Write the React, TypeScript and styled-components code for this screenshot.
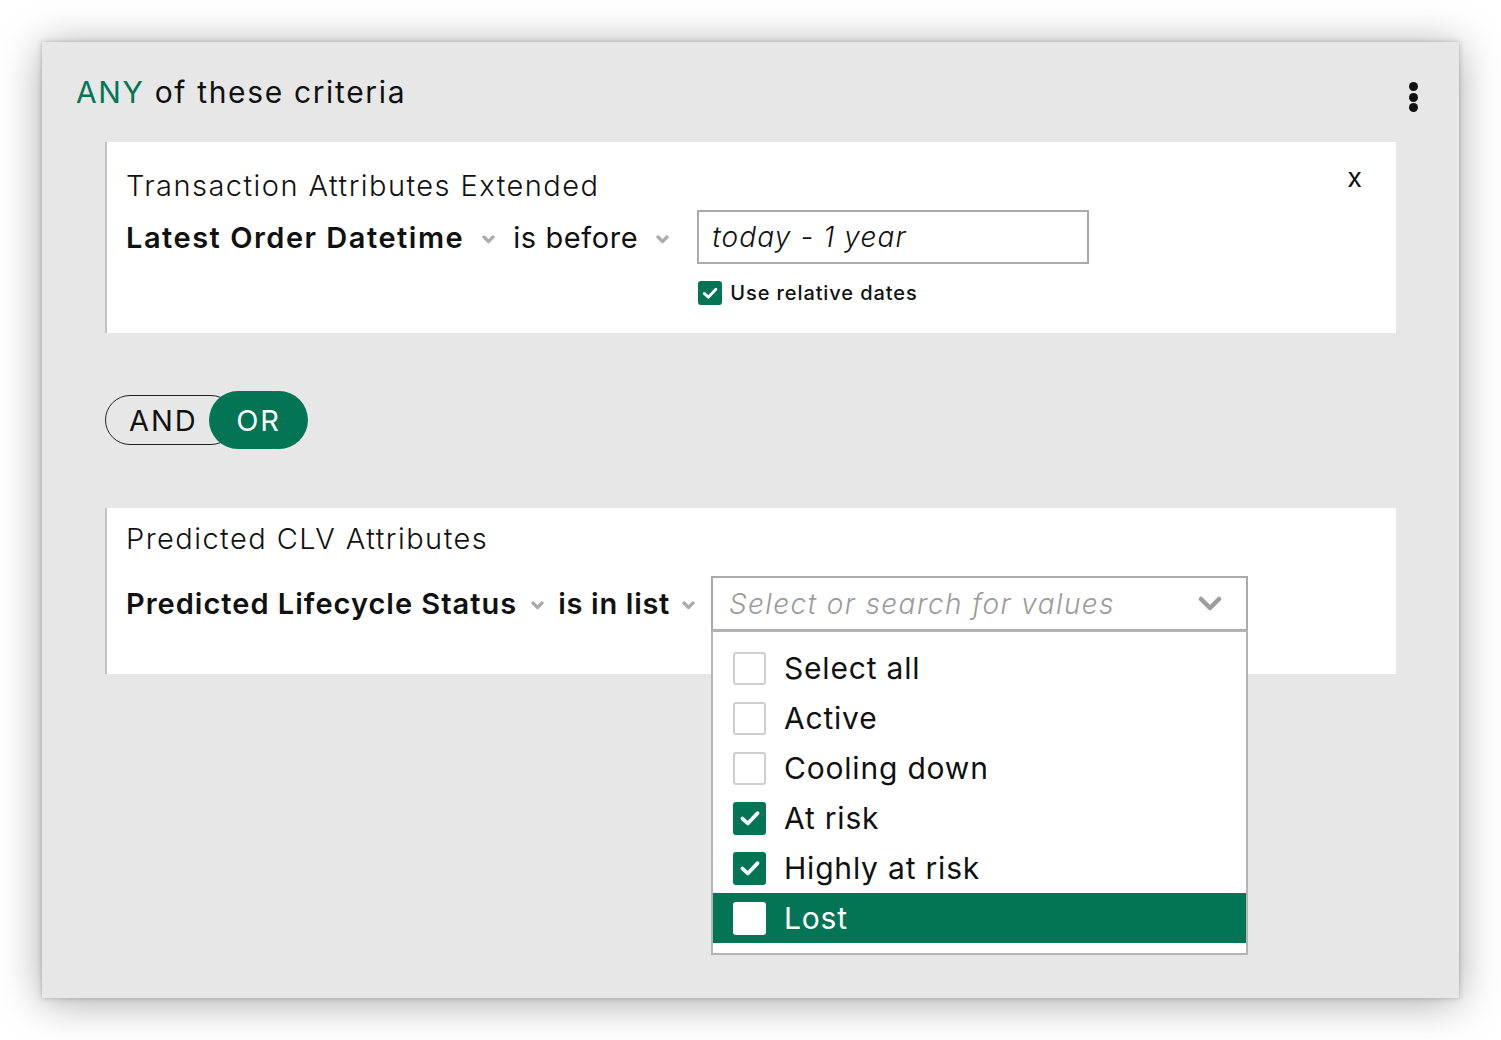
import React from 'react';
import styled, { createGlobalStyle } from 'styled-components';

const GREEN = '#037554';
const FONT = `Inter, "Open Sans", "DejaVu Sans", sans-serif`;

const Global = createGlobalStyle`
  html, body { margin: 0; padding: 0; background: #ffffff; }
  body { font-family: ${FONT}; color: #111111; }
  * { box-sizing: border-box; }
`;

const Page = styled.div`
  width: 1501px;
  height: 1040px;
  padding: 42px 0 0 42px;
  overflow: hidden;
`;

const Card = styled.section`
  width: 1417px;
  height: 956px;
  background: #e7e7e7;
  box-shadow: 0 0 5px rgba(0, 0, 0, 0.24), 0 4px 40px rgba(0, 0, 0, 0.34);
  padding: 0 34px;
  display: flex;
  flex-direction: column;
`;

const Header = styled.header`
  height: 100px;
  display: flex;
  align-items: center;
  justify-content: space-between;
`;

const HeaderTitle = styled.h2`
  margin: 0;
  font-size: 30px;
  font-weight: 400;
  letter-spacing: 1.65px;
  line-height: 36px;
  color: #111;
`;

const Any = styled.span`
  color: ${GREEN};
`;

const Kebab = styled.button`
  width: 24px;
  height: 32px;
  margin-top: 10px;
  padding: 0;
  border: 0;
  background: transparent;
  display: flex;
  flex-direction: column;
  align-items: center;
  justify-content: center;
  gap: 1.5px;
`;

const Dot = styled.span`
  width: 9px;
  height: 9px;
  border-radius: 50%;
  background: #111;
`;

const Conditions = styled.div`
  margin: 0 29px;
  display: flex;
  flex-direction: column;
`;

const ConditionCard = styled.div<{ $h: number; $pt: number }>`
  position: relative;
  height: ${(p) => p.$h}px;
  background: #ffffff;
  border-left: 2px solid #c4c4c4;
  padding: ${(p) => p.$pt}px 34px 0 19px;
  display: flex;
  flex-direction: column;
`;

const TitleRow = styled.div`
  height: 36px;
  display: flex;
  align-items: center;
  justify-content: space-between;
`;

const GroupTitle = styled.div`
  font-size: 29px;
  font-weight: 300;
  letter-spacing: 1.45px;
  line-height: 36px;
`;

const Close = styled.button`
  border: 0;
  background: transparent;
  padding: 0;
  font-family: ${FONT};
  font-size: 27px;
  font-weight: 400;
  line-height: 26px;
  color: #111;
  margin-top: -17px;
`;

const Row = styled.div<{ $mt: number }>`
  margin-top: ${(p) => p.$mt}px;
  display: flex;
  align-items: flex-start;
`;

const Field = styled.div<{ $h: number; $bold?: boolean; $ls: number }>`
  height: ${(p) => p.$h}px;
  display: flex;
  align-items: center;
  font-size: 29px;
  font-weight: ${(p) => (p.$bold ? 600 : 400)};
  letter-spacing: ${(p) => p.$ls}px;
  white-space: nowrap;
`;

const ChevronWrap = styled.span<{ $h: number; $ml: number; $mr: number }>`
  height: ${(p) => p.$h}px;
  margin: 0 ${(p) => p.$mr}px 0 ${(p) => p.$ml}px;
  display: flex;
  align-items: center;
  padding-top: 4px;
`;

const SmallChevron = ({ h, ml, mr }: { h: number; ml: number; mr: number }) => (
  <ChevronWrap $h={h} $ml={ml} $mr={mr}>
    <svg width="13" height="9" viewBox="0 0 13 9">
      <polyline points="2,2 6.5,6.5 11,2" fill="none" stroke="#ababab" strokeWidth="3.2" strokeLinecap="round" strokeLinejoin="round" />
    </svg>
  </ChevronWrap>
);

const ValueColumn = styled.div`
  display: flex;
  flex-direction: column;
`;

const TextInput = styled.div`
  width: 392px;
  height: 54px;
  border: 2px solid #ababab;
  padding-left: 13px;
  display: flex;
  align-items: center;
  font-size: 28px;
  font-style: italic;
  font-weight: 300;
  letter-spacing: 1.1px;
  color: #111;
`;

const CheckRow = styled.label`
  margin-top: 17px;
  margin-left: 1px;
  display: flex;
  align-items: center;
  gap: 8px;
  font-size: 20px;
  font-weight: 500;
  letter-spacing: 0.9px;
  line-height: 24px;
`;

const Box = styled.span<{ $size: number; $checked?: boolean; $inverse?: boolean }>`
  width: ${(p) => p.$size}px;
  height: ${(p) => p.$size}px;
  flex: none;
  border-radius: 3px;
  display: flex;
  align-items: center;
  justify-content: center;
  background: ${(p) => (p.$checked ? GREEN : '#ffffff')};
  border: 2px solid ${(p) => (p.$checked ? GREEN : p.$inverse ? '#ffffff' : '#cfcfcf')};
`;

const Tick = ({ size }: { size: number }) => (
  <svg width={size} height={size} viewBox="0 0 24 24">
    <polyline points="5,12.5 10,17 19,7.5" fill="none" stroke="#ffffff" strokeWidth="3.4" strokeLinecap="round" strokeLinejoin="round" />
  </svg>
);

const Toggle = styled.div`
  margin: 58px 0 59px;
  height: 58px;
  display: flex;
  align-items: center;
`;

const AndPill = styled.button`
  width: 131px;
  height: 50px;
  border: 1px solid #222;
  border-radius: 25px;
  background: transparent;
  padding: 0 0 0 23px;
  text-align: left;
  font-family: ${FONT};
  font-size: 29px;
  font-weight: 400;
  letter-spacing: 1.9px;
  color: #111;
`;

const OrPill = styled.button`
  width: 99px;
  height: 58px;
  margin-left: -27px;
  border: 0;
  border-radius: 29px;
  background: ${GREEN};
  color: #ffffff;
  font-family: ${FONT};
  font-size: 29px;
  font-weight: 400;
  letter-spacing: 1.8px;
  padding: 0;
`;

const SelectWrap = styled.div`
  position: relative;
`;

const SelectBox = styled.div`
  width: 537px;
  height: 55px;
  border: 2px solid #ababab;
  padding: 0 24px 0 16px;
  display: flex;
  align-items: center;
  justify-content: space-between;
  background: #fff;
`;

const Placeholder = styled.span`
  font-size: 28px;
  font-style: italic;
  font-weight: 300;
  letter-spacing: 1.4px;
  color: #9b9b9b;
`;

const Menu = styled.ul`
  position: absolute;
  left: 0;
  top: calc(100% - 1px);
  width: 537px;
  margin: 0;
  padding: 11px 0 10px;
  list-style: none;
  background: #ffffff;
  border: 2px solid #b4b4b4;
  z-index: 2;
`;

const Option = styled.li<{ $active?: boolean }>`
  height: 50px;
  padding-left: 20px;
  display: flex;
  align-items: center;
  gap: 18px;
  font-size: 30px;
  font-weight: 400;
  letter-spacing: 0.8px;
  background: ${(p) => (p.$active ? GREEN : 'transparent')};
  color: ${(p) => (p.$active ? '#ffffff' : '#111')};
`;

const options = [
  { label: 'Select all', checked: false },
  { label: 'Active', checked: false },
  { label: 'Cooling down', checked: false },
  { label: 'At risk', checked: true },
  { label: 'Highly at risk', checked: true },
  { label: 'Lost', checked: false, active: true },
];

export default function App() {
  return (
    <>
      <Global />
      <Page>
        <Card>
          <Header>
            <HeaderTitle>
              <Any>ANY</Any> of these criteria
            </HeaderTitle>
            <Kebab aria-label="More">
              <Dot />
              <Dot />
              <Dot />
            </Kebab>
          </Header>
          <Conditions>
            <ConditionCard $h={191} $pt={26}>
              <TitleRow>
                <GroupTitle>Transaction Attributes Extended</GroupTitle>
                <Close>x</Close>
              </TitleRow>
              <Row $mt={6}>
                <Field $h={54} $bold $ls={1.5}>Latest Order Datetime</Field>
                <SmallChevron h={54} ml={18} mr={18} />
                <Field $h={54} $ls={0.6}>is before</Field>
                <SmallChevron h={54} ml={18} mr={28} />
                <ValueColumn>
                  <TextInput>today - 1 year</TextInput>
                  <CheckRow>
                    <Box $size={24} $checked>
                      <Tick size={20} />
                    </Box>
                    Use relative dates
                  </CheckRow>
                </ValueColumn>
              </Row>
            </ConditionCard>

            <Toggle>
              <AndPill>AND</AndPill>
              <OrPill>OR</OrPill>
            </Toggle>

            <ConditionCard $h={166} $pt={13}>
              <TitleRow>
                <GroupTitle>Predicted CLV Attributes</GroupTitle>
              </TitleRow>
              <Row $mt={19}>
                <Field $h={55} $bold $ls={1.0}>Predicted Lifecycle Status</Field>
                <SmallChevron h={55} ml={14} mr={14} />
                <Field $h={55} $bold $ls={0.7}>is in list</Field>
                <SmallChevron h={55} ml={12} mr={16} />
                <SelectWrap>
                  <SelectBox>
                    <Placeholder>Select or search for values</Placeholder>
                    <svg width="24" height="16" viewBox="0 0 24 16">
                      <polyline points="3,3 12,12 21,3" fill="none" stroke="#9d9d9d" strokeWidth="4.5" strokeLinecap="round" strokeLinejoin="round" />
                    </svg>
                  </SelectBox>
                  <Menu>
                    {options.map((o) => (
                      <Option key={o.label} $active={o.active}>
                        <Box $size={33} $checked={o.checked} $inverse={o.active}>
                          {o.checked && <Tick size={26} />}
                        </Box>
                        {o.label}
                      </Option>
                    ))}
                  </Menu>
                </SelectWrap>
              </Row>
            </ConditionCard>
          </Conditions>
        </Card>
      </Page>
    </>
  );
}
